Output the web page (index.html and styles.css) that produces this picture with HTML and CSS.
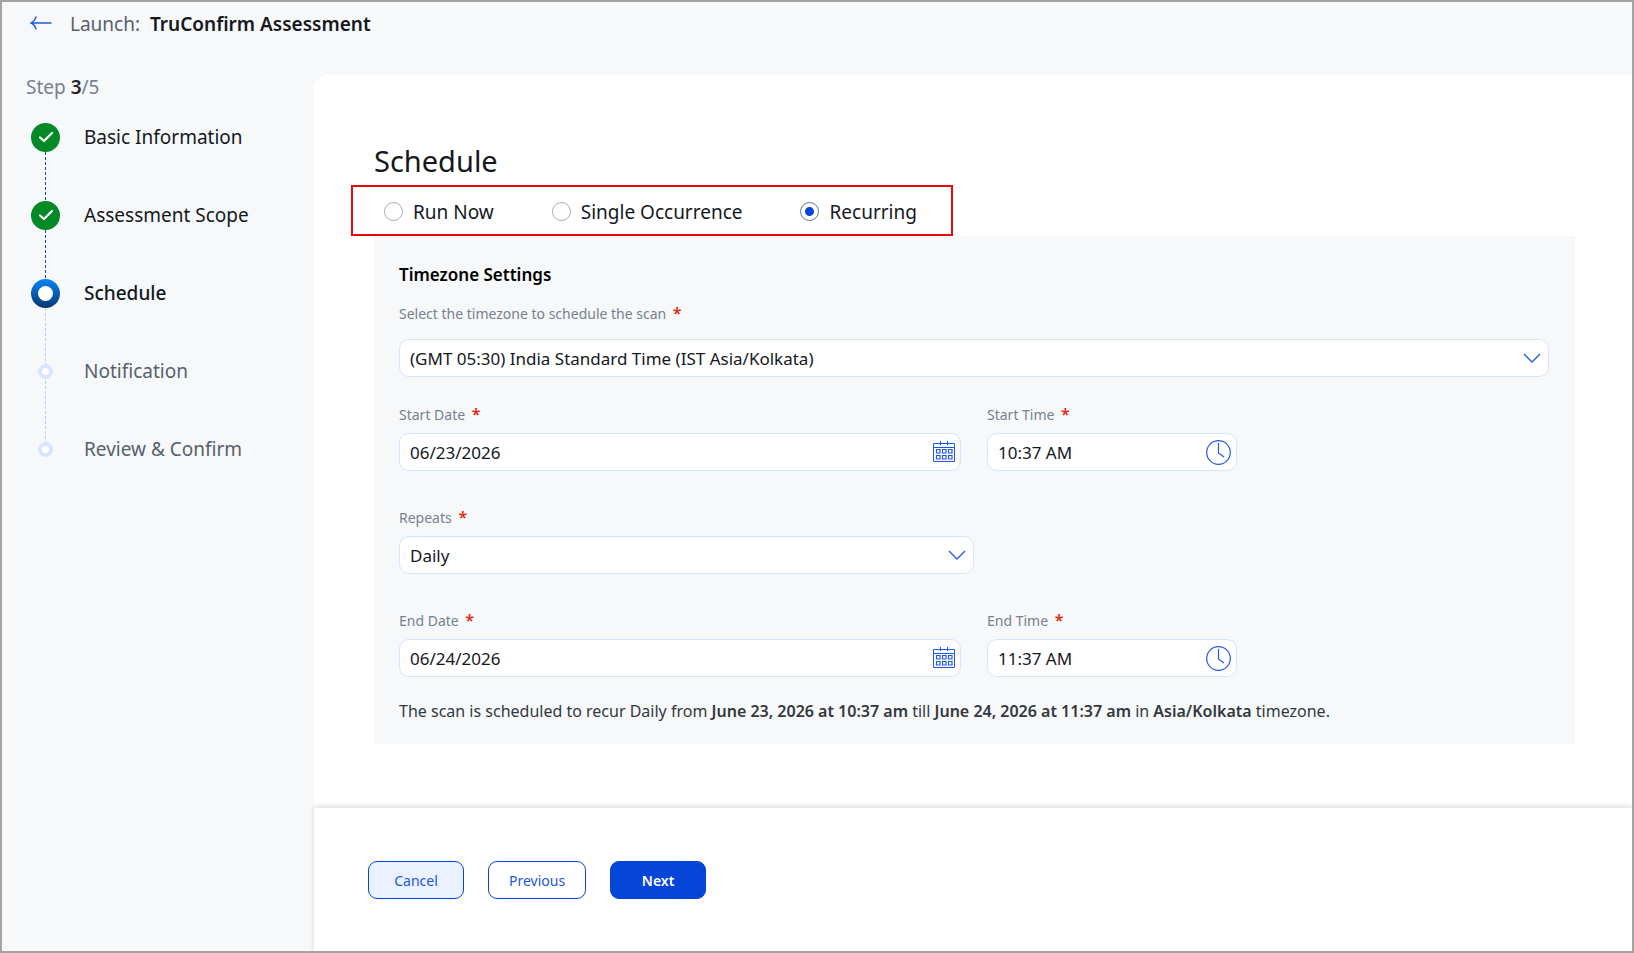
FILE: index.html
```
<!DOCTYPE html>
<html lang="en">
<head>
    <meta charset="UTF-8">
    <meta name="viewport" content="width=device-width, initial-scale=1.0">
    <title>Launch: TruConfirm Assessment</title>
    <link rel="stylesheet" href="styles.css">
</head>
<body>

    <header class="topbar">
        <a href="#" class="back" aria-label="Back">
            <svg width="22" height="14" viewBox="0 0 22 14" fill="none" stroke="#1f5ae0" stroke-width="1.4" stroke-linecap="round">
                <path d="M21 7H1M6 1C5 4 3.500 6 1 7C3.500 8 5 10 6 13"/>
            </svg>
        </a>
        <h1 class="title"><span class="title-prefix">Launch:</span> TruConfirm Assessment</h1>
    </header>

    <div class="layout">
        <aside class="sidebar">
            <p class="step-count">Step <b>3</b>/5</p>
            <ol class="steps">
                <li class="step done">
                    <span class="marker">
                        <svg width="16" height="12" viewBox="0 0 16 12" fill="none" stroke="#fff" stroke-width="2.200" stroke-linecap="round" stroke-linejoin="round"><path d="M2 6.500L6 10L14 2"/></svg>
                    </span>
                    <span>Basic Information</span>
                </li>
                <li class="step done">
                    <span class="marker">
                        <svg width="16" height="12" viewBox="0 0 16 12" fill="none" stroke="#fff" stroke-width="2.200" stroke-linecap="round" stroke-linejoin="round"><path d="M2 6.500L6 10L14 2"/></svg>
                    </span>
                    <span>Assessment Scope</span>
                </li>
                <li class="step current"><span class="marker"></span><span>Schedule</span></li>
                <li class="step"><span class="marker"></span><span>Notification</span></li>
                <li class="step"><span class="marker"></span><span>Review &amp; Confirm</span></li>
            </ol>
        </aside>

        <main class="main">
            <form class="content" id="schedule-form">
                <h2 class="heading">Schedule</h2>

                <div class="modes">
                    <label class="mode"><input type="radio" name="mode" value="now"> Run Now</label>
                    <label class="mode"><input type="radio" name="mode" value="single"> Single Occurrence</label>
                    <label class="mode"><input type="radio" name="mode" value="recurring" checked> Recurring</label>
                </div>

                <section class="panel">
                    <h3 class="panel-title">Timezone Settings</h3>

                    <div class="field timezone">
                        <label for="timezone">Select the timezone to schedule the scan <b>*</b></label>
                        <div class="control">
                            <select id="timezone">
                                <option>(GMT 05:30) India Standard Time (IST Asia/Kolkata)</option>
                            </select>
                            <svg class="chevron" width="18" height="10" viewBox="0 0 18 10" fill="none" stroke="#1f5ae0" stroke-width="1.300"><path d="M1 1L9 9L17 1"/></svg>
                        </div>
                    </div>

                    <div class="row">
                        <div class="field date">
                            <label for="start-date">Start Date <b>*</b></label>
                            <div class="control">
                                <input type="text" id="start-date" value="06/23/2026">
                                <button type="button" class="picker" aria-label="Pick start date">
                                    <svg width="22" height="22" viewBox="0 0 22 22" fill="none" stroke="#1f5ae0">
                                        <path d="M.5 2.500h21v18h-21zM.5 6.500h21M7.500 0v4M14.500 0v4"/>
                                        <path stroke-width="1.200" d="M3.500 8.500h3.500v3.500h-3.500zM9.500 8.500h3.500v3.500h-3.500zM15.500 8.500h3.500v3.500h-3.500zM3.500 14.500h3.500v3.500h-3.500zM9.500 14.500h3.500v3.500h-3.500zM15.500 14.500h3.500v3.500h-3.500z"/>
                                    </svg>
                                </button>
                            </div>
                        </div>
                        <div class="field time">
                            <label for="start-time">Start Time <b>*</b></label>
                            <div class="control">
                                <input type="text" id="start-time" value="10:37 AM">
                                <button type="button" class="picker" aria-label="Pick start time">
                                    <svg width="25" height="25" viewBox="0 0 25 25" fill="none" stroke="#1f5ae0" stroke-width="1.200">
                                        <circle cx="12.500" cy="12.500" r="11.800"/><path d="M12.500 3v10L18 17"/>
                                    </svg>
                                </button>
                            </div>
                        </div>
                    </div>

                    <div class="row">
                        <div class="field repeats">
                            <label for="repeats">Repeats <b>*</b></label>
                            <div class="control">
                                <select id="repeats">
                                    <option>Daily</option>
                                </select>
                                <svg class="chevron" width="18" height="10" viewBox="0 0 18 10" fill="none" stroke="#1f5ae0" stroke-width="1.300"><path d="M1 1L9 9L17 1"/></svg>
                            </div>
                        </div>
                    </div>

                    <div class="row">
                        <div class="field date">
                            <label for="end-date">End Date <b>*</b></label>
                            <div class="control">
                                <input type="text" id="end-date" value="06/24/2026">
                                <button type="button" class="picker" aria-label="Pick end date">
                                    <svg width="22" height="22" viewBox="0 0 22 22" fill="none" stroke="#1f5ae0">
                                        <path d="M.5 2.500h21v18h-21zM.5 6.500h21M7.500 0v4M14.500 0v4"/>
                                        <path stroke-width="1.200" d="M3.500 8.500h3.500v3.500h-3.500zM9.500 8.500h3.500v3.500h-3.500zM15.500 8.500h3.500v3.500h-3.500zM3.500 14.500h3.500v3.500h-3.500zM9.500 14.500h3.500v3.500h-3.500zM15.500 14.500h3.500v3.500h-3.500z"/>
                                    </svg>
                                </button>
                            </div>
                        </div>
                        <div class="field time">
                            <label for="end-time">End Time <b>*</b></label>
                            <div class="control">
                                <input type="text" id="end-time" value="11:37 AM">
                                <button type="button" class="picker" aria-label="Pick end time">
                                    <svg width="25" height="25" viewBox="0 0 25 25" fill="none" stroke="#1f5ae0" stroke-width="1.200">
                                        <circle cx="12.500" cy="12.500" r="11.800"/><path d="M12.500 3v10L18 17"/>
                                    </svg>
                                </button>
                            </div>
                        </div>
                    </div>

                    <p class="summary">The scan is scheduled to recur Daily from <b>June 23, 2026 at 10:37 am</b> till <b>June 24, 2026 at 11:37 am</b> in <b>Asia/Kolkata</b> timezone.</p>
                </section>
            </form>

            <footer class="actions">
                <button type="button" class="btn cancel">Cancel</button>
                <button type="button" class="btn">Previous</button>
                <button type="submit" form="schedule-form" class="btn next">Next</button>
            </footer>
        </main>
    </div>

</body>
</html>
```
FILE: styles.css
```
*, *::before, *::after {
    box-sizing: border-box;
}

body {
    margin: 0;
    min-height: 100vh;
    display: flex;
    flex-direction: column;
    border: 2px solid #a3a3a3;
    background-color: #f6f8fa;
    color: #14181d;
    font-family: "Noto Sans", sans-serif;
    font-size: 17px;
}

h1, h2, h3, p, ol {
    margin: 0;
    padding: 0;
}

b {
    font-weight: 600;
}

input, select, button {
    font: inherit;
    color: inherit;
}

.topbar {
    display: flex;
    gap: 18px;
    padding: 8px 28px 37px;
}

.back {
    display: flex;
    align-items: center;
    height: 26px;
}

.title {
    font-size: 19px;
    line-height: 28px;
    font-weight: 600;
}

.title-prefix {
    margin-right: 5px;
    font-weight: 400;
    color: #56616e;
}

.layout {
    flex: 1;
    display: flex;
}

/* steps */
.sidebar {
    width: 312px;
    flex-shrink: 0;
    padding-left: 24px;
}

.step-count {
    font-size: 19px;
    line-height: 24px;
    color: #77818f;
}

.step-count b {
    color: #1f242a;
}

.steps {
    list-style: none;
    padding: 11px 0 0 5px;
}

.step {
    position: relative;
    display: flex;
    align-items: center;
    gap: 24px;
    height: 54px;
    margin-bottom: 24px;
    font-size: 19px;
    color: #56616e;
}

/* dashed connector to the next step */
.step:not(:last-child)::before {
    content: "";
    position: absolute;
    left: 14px;
    top: 27px;
    height: 78px;
    border-left: 1px dashed #b9cbf5;
}

.step.done::before {
    border-color: #0546d8;
}

.marker {
    position: relative;
    width: 29px;
    height: 29px;
    display: flex;
    align-items: center;
    justify-content: center;
    border-radius: 50%;
}

.marker::after {
    content: "";
    width: 15px;
    height: 15px;
    border: 4px solid #dae4ff;
    border-radius: 50%;
    background-color: #fff;
}

.done, .current {
    color: #14181d;
}

.current {
    font-weight: 500;
}

.done .marker {
    background-color: #038a27;
}

.done .marker::after {
    display: none;
}

.current .marker {
    background: linear-gradient(#0a85fa, #06366c);
}

.current .marker::after {
    border: none;
}

/* main card */
.main {
    flex: 1;
    min-width: 0;
    display: flex;
    flex-direction: column;
    border-top-left-radius: 14px;
    background-color: #fff;
}

.content {
    flex: 1;
    padding: 66px 57px 63px 60px;
}

.heading {
    font-size: 29px;
    line-height: 40px;
    font-weight: 400;
}

.modes {
    width: fit-content;
    display: flex;
    gap: 58px;
    margin: 4px 0 0 -23px;
    padding: 2px 34px 0 31px;
    border: 2px solid #ea0707;
}

.mode {
    display: flex;
    align-items: center;
    gap: 10px;
    height: 45px;
    font-size: 19px;
}

.mode input {
    appearance: none;
    width: 19px;
    height: 19px;
    margin: 0;
    border: 1px solid #a3aec0;
    border-radius: 50%;
    background-color: #fff;
}

.mode input:checked {
    border-color: #6b7788;
    background: radial-gradient(circle, #0546d8 4px, #fff 5px);
}

.panel {
    padding: 25px 26px 21px 25px;
    background-color: #f6f8fa;
}

.panel-title {
    font-size: 17px;
    line-height: 28px;
    font-weight: 600;
    color: #000;
}

.field {
    display: flex;
    flex-direction: column;
    gap: 8px;
}

.field label {
    font-size: 14px;
    line-height: 20px;
    color: #77818f;
}

.field label b {
    margin-left: 3px;
    font-size: 16px;
    line-height: 16px;
    color: #e32a13;
}

.timezone {
    gap: 15px;
    margin: 15px 0 28px;
}

.row {
    display: flex;
    gap: 26px;
    margin-bottom: 37px;
}

.date {
    width: calc(50% - 13px);
}

.time {
    width: 250px;
}

.repeats {
    width: 50%;
}

.control {
    position: relative;
    display: flex;
    align-items: center;
    height: 38px;
    border: 1px solid #d8e4fc;
    border-radius: 10px;
    background-color: #fff;
}

.control input, .control select {
    appearance: none;
    flex: 1;
    min-width: 0;
    height: 100%;
    padding: 0 10px;
    border: none;
    outline: none;
    background: transparent;
}

.chevron {
    position: absolute;
    right: 7px;
    pointer-events: none;
}

.picker {
    display: flex;
    padding: 0 5px;
    border: none;
    background: none;
    cursor: pointer;
}

.summary {
    margin-top: -15px;
    font-size: 16px;
    line-height: 24px;
    color: #33383e;
}

/* footer */
.actions {
    display: flex;
    gap: 24px;
    padding: 53px 54px 52px;
    border-top: 1px solid #e8ebf3;
    background-color: #fff;
    box-shadow: 0 -1px 5px rgba(0, 0, 0, 0.14);
}

.btn {
    min-width: 96px;
    height: 38px;
    padding: 0 20px;
    border: 1px solid #0546d8;
    border-radius: 9px;
    background-color: #fff;
    color: #1f55dc;
    font-size: 14px;
    cursor: pointer;
}

.cancel {
    background-color: #eaf1ff;
}

.next {
    background-color: #0546d8;
    color: #fff;
    font-weight: 600;
}
```
